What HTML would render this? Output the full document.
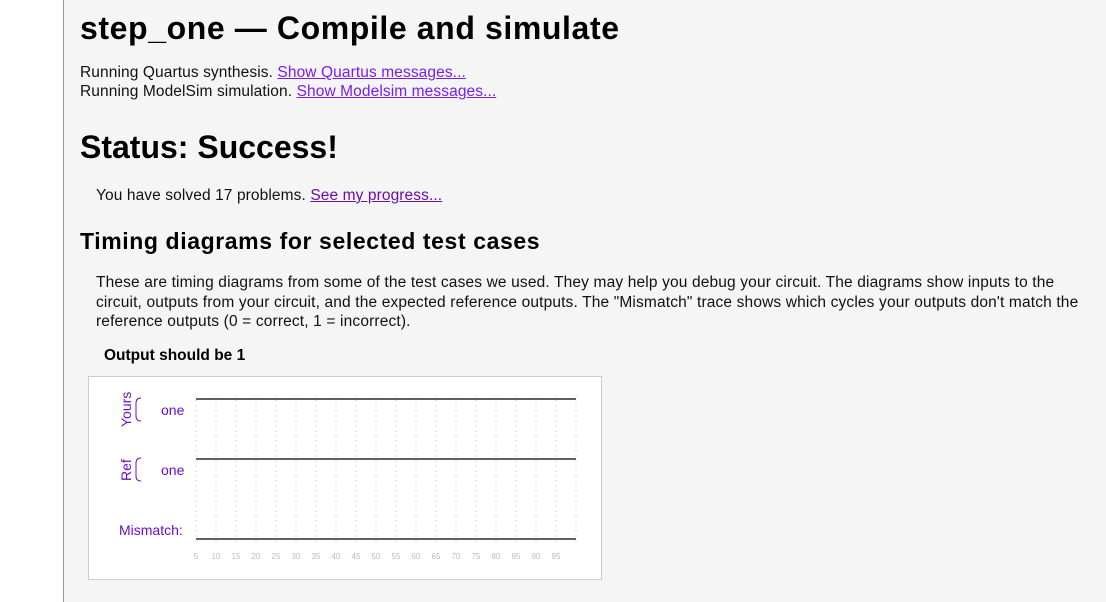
<!DOCTYPE html>
<html><head><style>
body{margin:0;width:1106px;height:602px;background:#fff;font-family:"Liberation Sans",sans-serif;overflow:hidden;position:relative}
.main{position:absolute;left:63px;top:0;width:1043px;height:602px;background:#f5f5f5;border-left:1px solid #999}
h1{position:absolute;left:16px;margin:0;font-weight:bold;color:#000;white-space:nowrap}
.t{position:absolute;font-size:15.5px;color:#111;white-space:nowrap;line-height:19px;letter-spacing:0.1px}
a{color:#7a1cf0;text-decoration:underline}
a.v{color:#6a0dad}
</style></head><body>
<div class="main">
<h1 style="top:10px;font-size:32px;letter-spacing:0.6px">step_one — Compile and simulate</h1>
<div class="t" style="left:16px;top:63px">Running Quartus synthesis. <a>Show Quartus messages...</a><br>Running ModelSim simulation. <a>Show Modelsim messages...</a></div>
<h1 style="top:129px;font-size:32px">Status: Success!</h1>
<div class="t" style="left:32px;top:186px">You have solved 17 problems. <a class="v">See my progress...</a></div>
<h1 style="top:228px;font-size:23px;letter-spacing:0.6px">Timing diagrams for selected test cases</h1>
<div class="t" style="left:32px;top:273px;width:990px;white-space:normal;line-height:19.5px;letter-spacing:0.15px">These are timing diagrams from some of the test cases we used. They may help you debug your circuit. The diagrams show inputs to the circuit, outputs from your circuit, and the expected reference outputs. The "Mismatch" trace shows which cycles your outputs don't match the reference outputs (0 = correct, 1 = incorrect).</div>
<div style="position:absolute;left:40px;top:347px;font-weight:bold;font-size:15.5px">Output should be 1</div>
<div style="position:absolute;left:24px;top:376px;width:512px;height:202px;background:#fff;border:1px solid #ccc">
<svg width="512" height="202" style="position:absolute;left:0;top:0" font-family="Liberation Sans,sans-serif">
<g stroke="#ddd" stroke-dasharray="2,3">
<line x1="107" y1="18" x2="107" y2="168"/><line x1="127" y1="18" x2="127" y2="168"/><line x1="147" y1="18" x2="147" y2="168"/><line x1="167" y1="18" x2="167" y2="168"/><line x1="187" y1="18" x2="187" y2="168"/><line x1="207" y1="18" x2="207" y2="168"/><line x1="227" y1="18" x2="227" y2="168"/><line x1="247" y1="18" x2="247" y2="168"/><line x1="267" y1="18" x2="267" y2="168"/><line x1="287" y1="18" x2="287" y2="168"/><line x1="307" y1="18" x2="307" y2="168"/><line x1="327" y1="18" x2="327" y2="168"/><line x1="347" y1="18" x2="347" y2="168"/><line x1="367" y1="18" x2="367" y2="168"/><line x1="387" y1="18" x2="387" y2="168"/><line x1="407" y1="18" x2="407" y2="168"/><line x1="427" y1="18" x2="427" y2="168"/><line x1="447" y1="18" x2="447" y2="168"/><line x1="467" y1="18" x2="467" y2="168"/><line x1="487" y1="18" x2="487" y2="168"/>
</g>
<g stroke="#000" stroke-width="1.3"><line x1="107" y1="22" x2="487" y2="22"/><line x1="107" y1="82" x2="487" y2="82"/><line x1="107" y1="162" x2="487" y2="162"/></g>
<g fill="#6a0dcc" font-size="14"><text x="72" y="38">one</text><text x="72" y="98">one</text><text x="30" y="158">Mismatch:</text>
<text transform="translate(42,50) rotate(-90)">Yours</text><text transform="translate(42,104) rotate(-90)">Ref</text></g>
<g fill="none" stroke="#6a0dcc"><path d="M52,21 Q47,21 47,26 V39 Q47,44 52,44"/><path d="M52,81 Q47,81 47,86 V99 Q47,104 52,104"/></g>
<g fill="#bbb" font-size="8" text-anchor="middle"><text x="107" y="182">5</text><text x="127" y="182">10</text><text x="147" y="182">15</text><text x="167" y="182">20</text><text x="187" y="182">25</text><text x="207" y="182">30</text><text x="227" y="182">35</text><text x="247" y="182">40</text><text x="267" y="182">45</text><text x="287" y="182">50</text><text x="307" y="182">55</text><text x="327" y="182">60</text><text x="347" y="182">65</text><text x="367" y="182">70</text><text x="387" y="182">75</text><text x="407" y="182">80</text><text x="427" y="182">85</text><text x="447" y="182">90</text><text x="467" y="182">95</text></g>
</svg></div>
</div>
</body></html>
